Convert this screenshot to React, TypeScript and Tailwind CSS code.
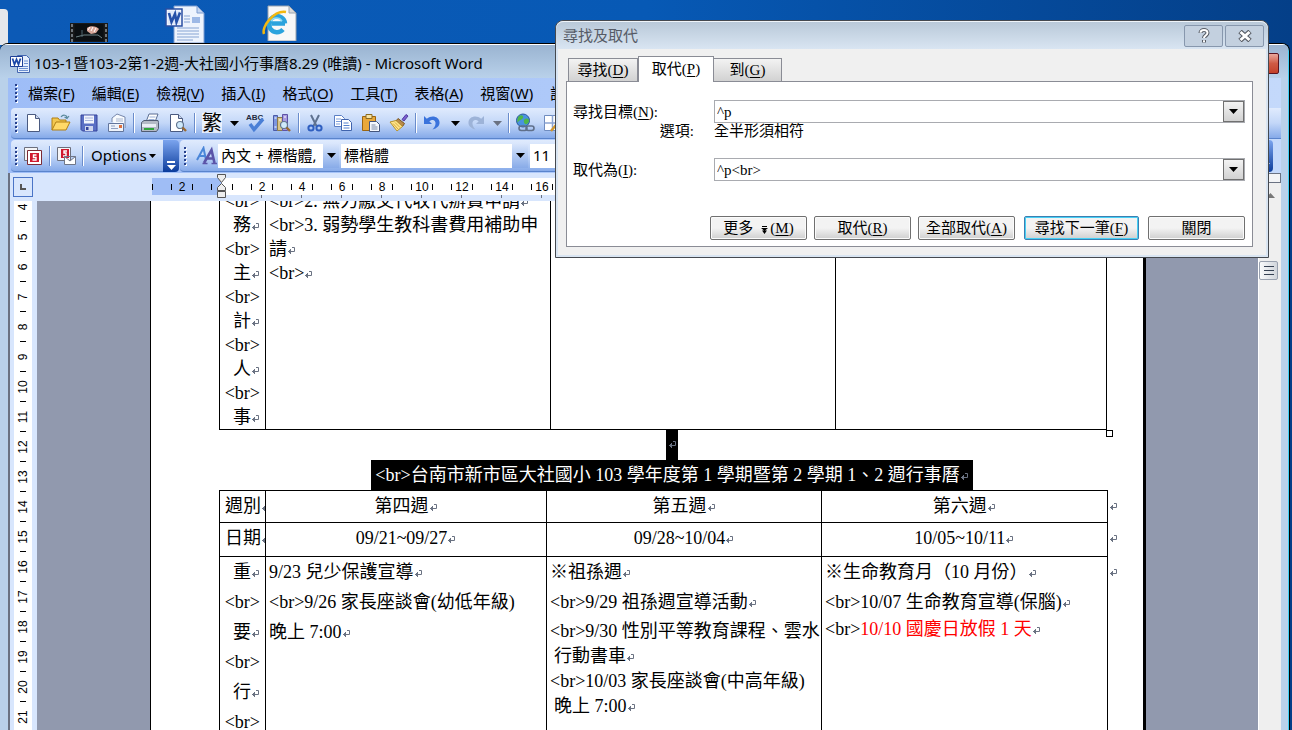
import React from 'react';

const uiFont = "font-['Noto_Sans','Noto_Sans_CJK_TC',sans-serif]";
const docFont = "font-['Liberation_Serif','Noto_Sans_CJK_TC',serif]";
const rulerFont = "font-['Liberation_Sans',sans-serif]";

const menus: [string, string][] = [
  ['檔案', 'F'],
  ['編輯', 'E'],
  ['檢視', 'V'],
  ['插入', 'I'],
  ['格式', 'O'],
  ['工具', 'T'],
  ['表格', 'A'],
  ['視窗', 'W'],
  ['說明', 'H'],
];

const rulerCells = ['2', '', '2', '4', '6', '8', '10', '12', '14', '16', '18', '20'];
const sideRuler = Array.from({ length: 18 }, (_, i) => String(i + 4));

/* ---------- small shared pieces ---------- */

const Caret = ({ className = 'text-black' }: { className?: string }) => (
  <svg width="9" height="5" viewBox="0 0 9 5" className={`shrink-0 ${className}`}>
    <path d="M0 0h9L4.500 5z" fill="currentColor" />
  </svg>
);

const Return = () => (
  <svg width="9" height="8" viewBox="0 0 9 8" className="inline-block shrink-0 text-gray-500" fill="none" stroke="currentColor">
    <path d="M5 .5h2.500v4H1M3.500 2v5M2.500 3v3M1.500 4v1" />
  </svg>
);

const Grip = () => (
  <span className="flex w-4 shrink-0 flex-col gap-0.5 pl-1">
    {[0, 1, 2, 3, 4].map((i) => (
      <span key={i} className="size-0.5 bg-[#27418c] shadow-[1px_1px_0_#fff]" />
    ))}
  </span>
);

const Sep = () => <span className="mx-0.5 h-5 w-px shrink-0 bg-[#6a8ccb] shadow-[1px_0_0_#fff]" />;

const Key = ({ k }: { k: string }) => (
  <>
    (<u className="underline-offset-2">{k}</u>)
  </>
);

const Tool = ({ label, children, className = 'w-7' }: { label: string; children: React.ReactNode; className?: string }) => (
  <button type="button" aria-label={label} className={`flex h-6 shrink-0 items-center justify-center ${className}`}>
    {children}
  </button>
);

const Svg = ({ children, size = 20 }: { children: React.ReactNode; size?: number }) => (
  <svg width={size} height={size} viewBox="0 0 20 20" fill="none">
    {children}
  </svg>
);

/* ---------- icons ---------- */

const WordIcon = ({ size }: { size: number }) => (
  <svg width={size} height={size} viewBox="0 0 40 40">
    <path d="M9 2h23l7 7v30H9z" fill="#eef4fd" stroke="#7d9cd0" />
    <path d="M32 2v7h7z" fill="#c5d6f0" stroke="#7d9cd0" />
    <path d="M27 13h8v6h-8z" fill="#9db9e6" />
    <path d="M19 12h6M19 15h6M19 18h6M12 24h22M12 27h22M12 30h22M12 33h22M12 36h16" stroke="#86a3d4" strokeWidth="1.200" />
    <path d="M1 5h16v17H1z" fill="#fff" stroke="#2a4fa3" strokeWidth="1.500" />
    <path d="M2.500 6.500h13v14h-13z" fill="#dfe9fa" />
    <path d="M4 9l2.500 9L10 10l1.500 8L15 8.500" fill="none" stroke="#2450a8" strokeWidth="2.600" />
  </svg>
);

const WordTitleIcon = () => (
  <Svg>
    <path d="M7.500 1.500h9l3 3v14h-12z" fill="#e6effc" stroke="#4467b0" />
    <path d="M14 7h4M14 9.500h4M9 12.500h9M9 14.500h9M9 16.500h9" stroke="#6d90d0" />
    <path d="M.5 2.500h12v10H.5z" fill="#fff" stroke="#1d3f96" />
    <path d="M2.500 4.500l2 6 2-5 2 5 2-6" stroke="#1d49a8" strokeWidth="1.800" />
  </Svg>
);

const IeIcon = () => (
  <svg width="38" height="36" viewBox="0 0 38 36">
    <path d="M7 1h21l7 7v28H7z" fill="#f8f8f8" stroke="#9aa4b0" />
    <path d="M28 1v7h7z" fill="#d9d9d9" stroke="#9aa4b0" />
    <path d="M24 18.500H10.500M24 18.500a8 8 0 1 0-2 6" fill="none" stroke="#2ba3dd" strokeWidth="4.500" />
    <path d="M10 16a6.500 6.500 0 0 1 11 0" fill="none" stroke="#8fdcf6" strokeWidth="1.500" />
    <path d="M3 29C0 22 13 5 25 7" fill="none" stroke="#f2b70f" strokeWidth="2.500" />
  </svg>
);

const FilmIcon = () => (
  <svg width="38" height="19" viewBox="0 0 38 19">
    <path d="M0 0h38v19H0z" fill="#1a1a1a" />
    <path d="M4.500 1h29v17h-29z" fill="#0b0f12" />
    <path d="M2 1v18M36 1v18" stroke="#6f757b" strokeWidth="2" strokeDasharray="3 2" />
    <path d="M17 5c3-3 10-2 12 1l-3 4-5 1-4-3z" fill="#d9a79a" />
    <path d="M20 4l-2 3M23 4l-2 4M26 5l-2 4" stroke="#fff" />
    <path d="M6 14l8-2h14l4 3" stroke="#6d8285" fill="none" />
    <path d="M12 7v7" stroke="#51666e" />
  </svg>
);

const NewIcon = () => (
  <Svg>
    <path d="M4.500 1.500h8l4 4v13h-12z" fill="#fff" stroke="#4a5a80" />
    <path d="M12.500 1.500v4h4" fill="#ccd8ee" stroke="#4a5a80" />
  </Svg>
);

const OpenIcon = () => (
  <Svg>
    <path d="M1 17V5h6l1.500 2H15v3" fill="#f3c84f" stroke="#b07f14" />
    <path d="M1 17l4-8h14l-4 8z" fill="#ffd968" stroke="#b07f14" />
    <path d="M10 4c2-3 6-2 6 1m2-2l-2 2.500L13.500 4" stroke="#5b8a9c" strokeWidth="1.200" />
  </Svg>
);

const SaveIcon = () => (
  <Svg>
    <path d="M2 2h16v16H3.500L2 16.500z" fill="#5a6fc4" stroke="#35439a" />
    <path d="M5 2.500h10v8H5z" fill="#f1f4fc" />
    <path d="M6 5h8M6 7.500h8" stroke="#a9b6dd" />
    <path d="M6 13h8v5H6z" fill="#cfd6ee" />
    <path d="M7 14h2.500v3H7z" fill="#35439a" />
  </Svg>
);

const MailIcon = () => (
  <Svg>
    <path d="M5 9V5l5-4 8 3v11" fill="#f7fafe" stroke="#7787ab" />
    <path d="M9 6h7M9 8h7" stroke="#a9b6cf" />
    <path d="M1.500 10.500h15v8h-15z" fill="#eef3fb" stroke="#62759c" />
    <path d="M4 13h4M4 15.500h7" stroke="#8fa0c2" />
    <path d="M12 12h3v3h-3z" fill="#dd6f3c" />
  </Svg>
);

const PrintIcon = () => (
  <Svg>
    <path d="M6 9l3-8h9l-3 8z" fill="#fff" stroke="#5a6d93" />
    <path d="M9.500 4h6M8.500 6.500h6" stroke="#9bb0d6" />
    <path d="M1.500 9.500L4 7.500h14l.5 2v6l-2 3h-15z" fill="#b4bac6" stroke="#505b72" />
    <path d="M2 11h14v3H2z" fill="#e9edf4" />
    <path d="M4 16h10" stroke="#2fa33a" strokeWidth="2" />
  </Svg>
);

const Lens = ({ x, y }: { x: number; y: number }) => (
  <g transform={`translate(${x} ${y})`}>
    <circle cx="4" cy="4" r="3.500" fill="#cfe9fa" stroke="#62758f" strokeWidth="1.200" />
    <path d="M6.500 6.500L10 10" stroke="#9a6a33" strokeWidth="2.400" />
  </g>
);

const PreviewIcon = () => (
  <Svg>
    <path d="M2.500 1.500h8l4 4v13h-12z" fill="#fff" stroke="#4a5a80" />
    <path d="M10.500 1.500v4h4" fill="#ccd8ee" stroke="#4a5a80" />
    <Lens x={8} y={8} />
  </Svg>
);

const SpellIcon = () => (
  <svg width="22" height="20" viewBox="0 0 22 20" fill="none">
    <text x="1" y="7" fontSize="8" fontWeight="700" fontFamily="Liberation Sans" fill="#222a3d">ABC</text>
    <path d="M5 11l4 5.500L18 6" stroke="#4a7fd6" strokeWidth="3.500" />
  </svg>
);

const ResearchIcon = () => (
  <Svg>
    <path d="M1.500 2.500h4v15h-4z" fill="#7d96e0" stroke="#4a5aa8" />
    <path d="M5.500 4.500h5v13h-5z" fill="#d8c48a" stroke="#8a7a4c" />
    <path d="M10.500 1.500h5v16h-5z" fill="#a79be0" stroke="#5d52a5" />
    <path d="M7 7h2M2.500 5h2M12 4h2M2.500 14h2" stroke="#fff" />
    <Lens x={8} y={8} />
  </Svg>
);

const CutIcon = () => (
  <Svg>
    <path d="M6 2l5.500 11M14 2L8.500 13" stroke="#5f7290" strokeWidth="2" />
    <circle cx="6" cy="15" r="2.600" stroke="#2f5fc0" strokeWidth="2" />
    <circle cx="14" cy="15" r="2.600" stroke="#2f5fc0" strokeWidth="2" />
  </Svg>
);

const CopyIcon = () => (
  <Svg>
    <path d="M1.500 2.500h7l3 3v8h-10z" fill="#fff" stroke="#5b7fc4" />
    <path d="M3 6h5M3 8.500h5M3 11h4" stroke="#7ea0dc" />
    <path d="M8.500 6.500h7l3 3v8h-10z" fill="#fff" stroke="#3f63ad" />
    <path d="M10.500 10h5M10.500 12.500h6M10.500 15h6" stroke="#5580cc" />
  </Svg>
);

const PasteIcon = () => (
  <Svg>
    <path d="M1.500 3.500h13v14h-13z" fill="#e9a83a" stroke="#9a6512" />
    <path d="M5 1.500h6v4H5z" fill="#f6e3a4" stroke="#8a6a20" />
    <path d="M8.500 8.500h7l3 3v7h-10z" fill="#f5f8fd" stroke="#44557c" />
    <path d="M10.500 12h4M10.500 14h6M10.500 16h6" stroke="#7d8ba8" />
  </Svg>
);

const BrushIcon = () => (
  <Svg>
    <path d="M13 6.500L17 1.500l2 1.500-4 5z" fill="#7b5fd0" stroke="#4f3aa0" />
    <path d="M9 5.500l6.500 5-2 3-6.500-5.500z" fill="#b98b4a" stroke="#7a5520" />
    <path d="M7 7.500L1 9l7 9 5.500-4.500z" fill="#ffe48a" stroke="#b8922c" />
    <path d="M4 10.500l5 5.500M6 9.500l5 5" stroke="#d5aa3d" />
  </Svg>
);

const UndoIcon = ({ dim = false }: { dim?: boolean }) => (
  <svg width="18" height="18" viewBox="0 0 18 18" fill="none" className={dim ? '-scale-x-100 text-[#9db3d8]' : 'text-[#3a73dc]'}>
    <path d="M1 2v8h8L6.300 7.300C10 4.500 13 6.500 12.500 10c-.2 2-1.500 4-3 5.500C14 14.500 17 11.500 16.500 8 16 2.800 9 .5 3.800 4.800z" fill="currentColor" />
  </svg>
);

const LinkIcon = () => (
  <Svg>
    <circle cx="8" cy="7.500" r="6.500" fill="#4a92e0" stroke="#28589e" />
    <path d="M4 3c3-2 5 0 4 2s-4 2-5 4-1-4 1-6zM10 6c3-1 4 0 4 2s-3 4-4 3-2-4 0-5z" fill="#4fb648" />
    <rect x="4" y="13" width="8" height="4.500" rx="2.200" stroke="#5f6f8a" strokeWidth="1.600" />
    <rect x="11" y="13" width="8" height="4.500" rx="2.200" stroke="#5f6f8a" strokeWidth="1.600" />
  </Svg>
);

const GridIcon = () => (
  <Svg>
    <path d="M1.500 2.500h16v15h-16z" fill="#fff" stroke="#6f8cc0" />
    <path d="M9.500 2.500v15M1.500 10h16" stroke="#8ba4d2" strokeWidth="1.500" />
    <path d="M8 18L18 6" stroke="#d0962c" strokeWidth="2.500" />
  </Svg>
);

const SnagIcon = ({ mail = false }: { mail?: boolean }) => (
  <Svg>
    <path d="M1.500 1.500h13v13h-13z" fill="#f5f5f7" stroke="#6c6f7c" />
    {!mail && <path d="M4.500 4.500h14v14h-14z" fill="#fff" stroke="#7c2a35" />}
    <path d={mail ? 'M5 3h8v9H5z' : 'M7 7h9v9H7z'} fill="#d0182e" />
    <path d={mail ? 'M11 5H8v2h2v3H7' : 'M13.500 9h-3v2.500h2.500V14H9.500'} stroke="#fff" strokeWidth="1.400" />
    {mail && <path d="M8.500 10.500h11v8h-11zl5.500 4.500 5.500-4.500" fill="#fff" stroke="#6f7688" />}
  </Svg>
);

const StylesIcon = () => (
  <svg width="22" height="20" viewBox="0 0 22 20" fill="none" className="shrink-0">
    <path d="M1 14L7.500 2l2.500 12M3.500 10H9" stroke="#4a86d8" strokeWidth="2" />
    <path d="M8 17L15.500 4l3 13M10.500 12.500h7" stroke="#5b54a8" strokeWidth="2.600" />
    <path d="M6.500 17.500h5M15.500 17.500H21" stroke="#5b54a8" strokeWidth="1.500" />
  </svg>
);

/* ---------- Word window ---------- */

const ComboBox = ({ label, value, className }: { label: string; value: string; className: string }) => (
  <div className={`flex h-6 shrink-0 bg-white ${className}`}>
    <input aria-label={label} defaultValue={value} className="min-w-0 flex-1 pl-[3px] outline-none" />
    <button type="button" aria-label={`${label}清單`} className="flex w-4 items-center justify-center bg-gradient-to-b from-[#d8e5fb] to-[#88abe8]">
      <Caret />
    </button>
  </div>
);

const Toolbars = () => (
  <div className="bg-gradient-to-r from-[#9ebdf7] to-[#c4d9fb] pb-px pl-[3px] text-[15px]">
    <nav className="flex h-[30px] items-center pr-3">
      <Grip />
      <div className="flex flex-1 gap-[17px] overflow-hidden pl-px whitespace-nowrap">
        {menus.map(([name, k]) => (
          <button key={k} type="button" className="shrink-0">
            {name}
            <Key k={k} />
          </button>
        ))}
      </div>
      <button type="button" aria-label="關閉文件" className="text-gray-800">
        <svg width="8" height="9" viewBox="0 0 8 9" fill="none" stroke="currentColor" strokeWidth="2">
          <path d="M.5 1l7 7M7.500 1l-7 7" />
        </svg>
      </button>
    </nav>

    <div className="flex h-[31px] items-center overflow-hidden rounded-l border-b border-[#5a84cc] bg-gradient-to-b from-[#e0ebfd] via-[#c3d7f8] to-[#86aae9]">
      <Grip />
      <div className="-ml-2 flex items-center">
        <Tool label="新增"><NewIcon /></Tool>
        <Tool label="開啟"><OpenIcon /></Tool>
        <Tool label="儲存"><SaveIcon /></Tool>
        <Tool label="郵件"><MailIcon /></Tool>
        <Sep />
        <Tool label="列印"><PrintIcon /></Tool>
        <Tool label="預覽列印"><PreviewIcon /></Tool>
        <Sep />
        <button type="button" className="ml-[3px] flex h-6 w-6 items-center justify-center text-[20px] leading-6">
          <span className="h-5 bg-white/70 leading-5">繁</span>
        </button>
        <Tool label="繁簡選項" className="w-5"><Caret /></Tool>
        <Tool label="拼字檢查" className="w-6"><SpellIcon /></Tool>
        <Tool label="參考資料"><ResearchIcon /></Tool>
        <Sep />
        <Tool label="剪下"><CutIcon /></Tool>
        <Tool label="複製"><CopyIcon /></Tool>
        <Tool label="貼上"><PasteIcon /></Tool>
        <Tool label="複製格式"><BrushIcon /></Tool>
        <Sep />
        <Tool label="復原"><UndoIcon /></Tool>
        <Tool label="復原清單" className="w-[18px]"><Caret /></Tool>
        <Tool label="取消復原" className="w-6"><UndoIcon dim /></Tool>
        <Tool label="取消復原清單" className="w-[18px]"><Caret className="text-gray-500" /></Tool>
        <Sep />
        <Tool label="超連結"><LinkIcon /></Tool>
        <Tool label="表格及框線"><GridIcon /></Tool>
      </div>
    </div>

    <div className="mt-px flex h-8">
      <div className="flex w-[152px] items-center rounded-l border-b border-[#5a84cc] bg-gradient-to-b from-[#e0ebfd] via-[#c3d7f8] to-[#86aae9]">
        <Grip />
        <div className="-ml-2 flex items-center">
          <Tool label="SnagIt"><SnagIcon /></Tool>
          <Sep />
          <Tool label="SnagIt 郵件"><SnagIcon mail /></Tool>
          <Sep />
          <button type="button" className="flex items-center gap-0.5 pl-1.5">
            Options
            <svg width="7" height="4" viewBox="0 0 7 4"><path d="M0 0h7L3.500 4z" /></svg>
          </button>
        </div>
      </div>
      <button type="button" aria-label="工具列選項" className="flex w-4 flex-col items-center justify-end gap-0.5 rounded-r bg-gradient-to-b from-[#7ba4ee] to-[#0a3c9c] pb-0.5">
        <span className="h-0.5 w-2 bg-white" />
        <Caret className="text-white" />
      </button>
      <div className="ml-px flex flex-1 items-center gap-0.5 rounded-l border-b border-[#5a84cc] bg-gradient-to-b from-[#e0ebfd] via-[#c3d7f8] to-[#86aae9]">
        <Grip />
        <Tool label="樣式與格式" className="w-[18px]"><StylesIcon /></Tool>
        <ComboBox label="樣式" value="內文 + 標楷體," className="w-[121px]" />
        <ComboBox label="字型" value="標楷體" className="w-[187px]" />
        <ComboBox label="字型大小" value="11" className="w-14" />
      </div>
      <div className="mr-2 flex w-4 flex-col items-center justify-end rounded-r bg-gradient-to-b from-[#7ba4ee] to-[#0a3c9c] pb-1">
        <Caret className="text-white" />
      </div>
    </div>
  </div>
);

const TopRuler = () => (
  <div className={`flex h-7 bg-[#d8e6fd] pt-1 text-[12px] ${rulerFont}`}>
    <button type="button" aria-label="定位點" className="ml-[3px] flex size-5 items-center justify-center border border-[#4a74c6]">
      <svg width="6" height="6" viewBox="0 0 6 6"><path d="M1 0v5h5" fill="none" stroke="#555" strokeWidth="2" /></svg>
    </button>
    <div className="relative ml-[119px] flex-1">
      <div className="mt-px flex h-[17px] overflow-hidden bg-[linear-gradient(90deg,#9fbdf5_70px,#fff_70px)]">
        <span className="flex w-[10px] shrink-0 items-center"><i className="h-1.5 w-px bg-black" /></span>
        {rulerCells.map((n, i) => (
          <span key={i} className="flex w-10 shrink-0 items-center justify-between px-[9px] leading-none">
            <i className="h-1.5 w-px bg-black" />
            {n}
            <i className="h-1.5 w-px bg-black" />
          </span>
        ))}
      </div>
      {/* default tab stops */}
      <div className="flex gap-[39px] overflow-hidden pl-[109px]">
        {rulerCells.slice(2).map((n) => (
          <i key={n} className="h-[3px] w-px shrink-0 bg-gray-500" />
        ))}
      </div>
      {/* indent markers sit over the ruler */}
      <svg width="9" height="25" viewBox="0 0 9 25" className="absolute -top-1 left-[65px]" fill="#eee" stroke="#555">
        <path d="M.5 1.500h8v3l-4 5-4-5zM.5 17.500v-3l4-4 4 4v3zM.5 18.500h8v6h-8z" />
      </svg>
    </div>
  </div>
);

const SideRuler = () => (
  <div className={`w-[27px] shrink-0 overflow-hidden bg-[#d8e6fd] pl-1 text-[12px] ${rulerFont}`}>
    <div className="-mt-[9px] min-h-full w-[18px] bg-white pb-[9px]">
      {sideRuler.map((n) => (
        <div key={n} className="relative flex h-[30px] items-center justify-center">
          <span className="-rotate-90 leading-none">{n}</span>
          <i className="absolute bottom-0 h-px w-1.5 bg-black" />
        </div>
      ))}
    </div>
  </div>
);

const Line = ({ children, end = true, className = '' }: { children: React.ReactNode; end?: boolean; className?: string }) => (
  <p className={`whitespace-nowrap ${className}`}>
    {children}
    {end && <Return />}
  </p>
);

const Br = () => <>&lt;br&gt;</>;

const cell = 'border border-black p-0 align-top';

const Cols = ({ widths }: { widths: string[] }) => (
  <colgroup>
    {widths.map((w, i) => (
      <col key={i} className={w} />
    ))}
  </colgroup>
);

const UpperTable = () => (
  <table className="-mt-[13px] w-full table-fixed border-collapse leading-6">
    <Cols widths={['w-[46px]', 'w-[285px]', 'w-[285px]', '', 'w-[17px]']} />
    <tbody>
      <tr>
        <td className={`${cell} pr-[5px] text-right`}>
          <Line end={false}><Br /></Line>
          {['務', '主', '計', '人'].map((c) => (
            <React.Fragment key={c}>
              <Line>{c}</Line>
              <Line end={false}><Br /></Line>
            </React.Fragment>
          ))}
          <Line>事</Line>
        </td>
        <td className={`${cell} pl-[3px]`}>
          <Line><Br />2. 無力繳交代收代辦費申請</Line>
          <Line end={false}><Br />3. 弱勢學生教科書費用補助申</Line>
          <Line>請</Line>
          <Line><Br /></Line>
        </td>
        <td className={cell} />
        <td className={cell} />
        <td className="relative p-0">
          <span className="absolute -bottom-[7px] -left-px size-[7px] border border-black bg-white" />
        </td>
      </tr>
    </tbody>
  </table>
);

const LowerTable = () => (
  <table className="w-full table-fixed border-collapse leading-[30px]">
    <Cols widths={['w-[46px]', 'w-[281px]', 'w-[275px]', '', 'w-[16px]']} />
    <tbody>
      <tr className="h-8 text-center">
        <td className={`${cell} overflow-hidden pl-[5px] text-left`}><Line>週別</Line></td>
        {['第四週', '第五週', '第六週'].map((t) => (
          <td key={t} className={cell}><Line>{t}</Line></td>
        ))}
        <td className="p-0 pl-px text-left align-top"><Return /></td>
      </tr>
      <tr className="h-[34px] text-center">
        <td className={`${cell} overflow-hidden pl-[5px] text-left`}><Line>日期</Line></td>
        {['09/21~09/27', '09/28~10/04', '10/05~10/11'].map((t) => (
          <td key={t} className={cell}><Line>{t}</Line></td>
        ))}
        <td className="p-0 pl-px text-left align-top"><Return /></td>
      </tr>
      <tr className="h-60">
        <td className={`${cell} pr-[5px] text-right`}>
          {['重', '要', '行'].map((c) => (
            <React.Fragment key={c}>
              <Line>{c}</Line>
              <Line end={false}><Br /></Line>
            </React.Fragment>
          ))}
        </td>
        <td className={`${cell} pl-[3px]`}>
          <Line>9/23 兒少保護宣導</Line>
          <Line end={false}><Br />9/26 家長座談會(幼低年級)</Line>
          <Line>晚上 7:00</Line>
        </td>
        <td className={`${cell} pl-[3px]`}>
          <Line>※祖孫週</Line>
          <Line><Br />9/29 祖孫週宣導活動</Line>
          <div className="pt-0.5 leading-[25px]">
            <Line end={false}><Br />9/30 性別平等教育課程、雲水</Line>
            <Line className="pl-1">行動書車</Line>
            <Line end={false}><Br />10/03 家長座談會(中高年級)</Line>
            <Line className="pl-1">晚上 7:00</Line>
          </div>
        </td>
        <td className={`${cell} pl-[3px]`}>
          <Line>※生命教育月（10 月份）</Line>
          <Line><Br />10/07 生命教育宣導(保腦)</Line>
          <Line className="leading-[25px]">
            <Br />
            <span className="text-[#ff0000]">10/10 國慶日放假 1 天</span>
          </Line>
        </td>
        <td className="p-0 pl-px text-left align-top"><Return /></td>
      </tr>
    </tbody>
  </table>
);

const ScrollBar = () => (
  <div className="flex w-[23px] shrink-0 flex-col border-l border-white bg-[#efefef] pt-[60px]">
    <button type="button" aria-label="捲動" className="flex size-[19px] flex-col items-center justify-center gap-[3px] rounded-xs border border-gray-400 bg-gradient-to-r from-gray-50 to-gray-300">
      {[0, 1, 2].map((i) => (
        <span key={i} className="h-px w-2.5 bg-gray-700" />
      ))}
    </button>
  </div>
);

const WordWindow = () => (
  <section className={`absolute top-[43px] right-0.5 bottom-0 left-0 flex flex-col overflow-hidden rounded-t-lg border-t border-r border-black bg-[#b9d1ea] pl-2 shadow-[inset_-1px_0_0_#3fd0f5] ${uiFont}`}>
    <header className="mr-px -ml-2 flex h-[34px] shrink-0 items-center border-t border-white bg-gradient-to-b from-[#9ab4d1] to-[#b9d1ea] pt-1 pr-[9px] pl-2.5">
      <WordTitleIcon />
      <h1 className="flex-1 pl-1 text-[15px]">103-1暨103-2第1-2週-大社國小行事曆8.29 (唯讀) - Microsoft Word</h1>
      <button type="button" aria-label="關閉" className="h-[21px] w-11 rounded-xs border border-[#5b1420] bg-gradient-to-b from-[#e8a79c] via-[#cf5a45] to-[#c4402a]" />
    </header>
    <div className="mr-2 flex min-h-0 flex-1 flex-col">
      <Toolbars />
      <div className="flex min-h-0 flex-1 flex-col border-l-2 border-gray-500">
        <div className="flex">
          <div className="min-w-0 flex-1"><TopRuler /></div>
          <div className="w-[23px] border-l border-white bg-[#efefef]">
            <div className="h-2.5 border border-gray-500 bg-gray-100" />
            <svg width="9" height="5" viewBox="0 0 9 5" className="mx-auto mt-2.5"><path d="M0 5h9L4.500 0z" fill="#777" /></svg>
          </div>
        </div>
        <div className="flex min-h-0 flex-1">
          <SideRuler />
          <main className="min-w-0 flex-1 overflow-hidden bg-[#9199ae] pr-[112px] pl-[113px]">
            <div className={`flow-root h-full border-r-[3px] border-l border-black bg-white pr-5 pl-[68px] text-[18px] ${docFont}`}>
              <UpperTable />
              <div className="flex h-[30px] justify-center pl-0.5">
                <span className="flex w-3 items-center justify-center bg-black"><Return /></span>
              </div>
              <div className="flex h-[30px] justify-center pl-0.5 leading-[30px]">
                <h2 className="bg-black px-1 whitespace-nowrap text-white">
                  <Br />台南市新市區大社國小 103 學年度第 1 學期暨第 2 學期 1、2 週行事曆
                  <Return />
                </h2>
              </div>
              <LowerTable />
            </div>
          </main>
          <ScrollBar />
        </div>
      </div>
    </div>
  </section>
);

/* ---------- find and replace dialog ---------- */

const pushButton = 'h-6 rounded-xs border border-[#707070] bg-gradient-to-b from-[#f3f3f3] from-50% to-[#cfcfcf] shadow-[inset_0_0_0_1px_#fbfbfb]';
const tab = 'h-[23px] border border-b-0 border-[#8a8c95] bg-gradient-to-b from-[#f3f3f3] to-[#d2d2d2]';

const DialogCombo = ({ id, value }: { id: string; value: string }) => (
  <div className="flex h-[23px] border border-[#a9abb0] bg-white">
    <input id={id} defaultValue={value} className="min-w-0 flex-1 pl-0.5 outline-none" />
    <button type="button" aria-label="清單" className="flex w-[21px] items-center justify-center border border-[#707070] bg-gradient-to-b from-[#f3f3f3] to-[#d2d2d2]">
      <Caret />
    </button>
  </div>
);

const FindDialog = () => (
  <section
    role="dialog"
    aria-label="尋找及取代"
    className={`absolute top-5 left-[555px] flex h-[238px] w-[714px] flex-col rounded-t-lg border border-[#45494f] bg-[#d9e5f2] px-0.5 pb-0.5 text-[15px] ${docFont}`}
  >
    <header className="-mx-0.5 flex h-7 shrink-0 items-center gap-0.5 rounded-t-lg border-t border-white/60 bg-gradient-to-b from-[#b9c9d9] to-[#d9e5f2] pr-1 pl-[7px]">
      <h2 className={`flex-1 text-[15px] text-[#565b66] ${uiFont}`}>尋找及取代</h2>
      <button type="button" aria-label="說明" className="flex h-[22px] w-[39px] items-center justify-center rounded-xs border border-[#8797ad] bg-[#c3d0df]">
        <svg width="12" height="16" viewBox="0 0 12 16" fill="none">
          <path d="M2.500 5c0-4 7-4 7 0 0 2.500-3.500 2.500-3.500 5M6 12v2.500" stroke="#555a63" strokeWidth="4" />
          <path d="M2.500 4.800c0-3.800 7-3.800 7 0C9.500 7.500 6 7.500 6 10M6 12.300v2" stroke="#fff" strokeWidth="2" />
        </svg>
      </button>
      <button type="button" aria-label="關閉" className="flex h-[22px] w-[39px] items-center justify-center rounded-xs border border-[#8797ad] bg-[#c3d0df]">
        <svg width="14" height="12" viewBox="0 0 14 12" fill="none">
          <path d="M2 1.500l10 9M12 1.500l-10 9" stroke="#555a63" strokeWidth="5" />
          <path d="M2.500 2l9 8M11.500 2l-9 8" stroke="#fff" strokeWidth="3" />
        </svg>
      </button>
    </header>

    <div className="flex flex-1 flex-col bg-[#f0f0f0] px-2 pb-2">
      <div role="tablist" className="flex h-8 items-end pl-0.5">
        <button role="tab" type="button" className={`${tab} w-[70px]`}>尋找<Key k="D" /></button>
        <button role="tab" type="button" aria-selected="true" className="relative -mb-px h-[26px] w-[76px] border border-b-0 border-[#8a8c95] bg-white">
          取代<Key k="P" />
        </button>
        <button role="tab" type="button" className={`${tab} w-[68px] border-l-0`}>到<Key k="G" /></button>
      </div>

      <form className="mr-[5px] flex flex-1 flex-col border border-[#8a8c95] bg-white pt-[18px] pr-[7px] pb-1.5 pl-1.5" onSubmit={(e) => e.preventDefault()}>
        <div className="grid grid-cols-[141px_1fr] items-center leading-4">
          <label htmlFor="find">尋找目標<Key k="N" />:</label>
          <DialogCombo id="find" value="^p" />
          <span className="pr-5 text-right">選項:</span>
          <span>全半形須相符</span>
          <label htmlFor="replace" className="mt-[19px]">取代為<Key k="I" />:</label>
          <div className="mt-[19px]"><DialogCombo id="replace" value="^p<br>" /></div>
        </div>
        <div className="mt-auto flex justify-end gap-[7px]">
          <button type="button" className={`${pushButton} w-[97px]`}>
            更多
            <svg width="7" height="8" viewBox="0 0 7 8" className="mr-0.5 ml-2 inline-block"><path d="M1 0h5v1H1zM0 2h7L3.500 5zM1 4.500h5L3.500 8z" /></svg>
            <Key k="M" />
          </button>
          <button type="button" className={`${pushButton} w-[97px]`}>取代<Key k="R" /></button>
          <button type="button" className={`${pushButton} w-[97px]`}>全部取代<Key k="A" /></button>
          <button type="submit" className="ml-0.5 h-6 w-[115px] rounded-xs border border-[#3c7fb1] bg-gradient-to-b from-[#f3f3f3] from-50% to-[#cfcfcf] shadow-[inset_0_0_0_1px_#46d0f5]">
            尋找下一筆<Key k="F" />
          </button>
          <button type="button" className={`${pushButton} ml-0.5 w-[97px]`}>關閉</button>
        </div>
      </form>
    </div>
  </section>
);

const App: React.FC = () => (
  <div className="relative h-screen min-h-[730px] overflow-hidden bg-gradient-to-r from-[#0c5ab6] via-[#0759b5] to-[#043f88] text-black">
    {/* desktop shortcuts */}
    <div className="absolute top-[9px] left-0 h-9 w-2 rounded-tr bg-gray-200" />
    <div className="absolute top-[23px] left-[70px]"><FilmIcon /></div>
    <div className="absolute top-1 left-[165px]"><WordIcon size={40} /></div>
    <div className="absolute top-[5px] left-[261px]"><IeIcon /></div>

    <WordWindow />
    <FindDialog />
  </div>
);

export default App;
